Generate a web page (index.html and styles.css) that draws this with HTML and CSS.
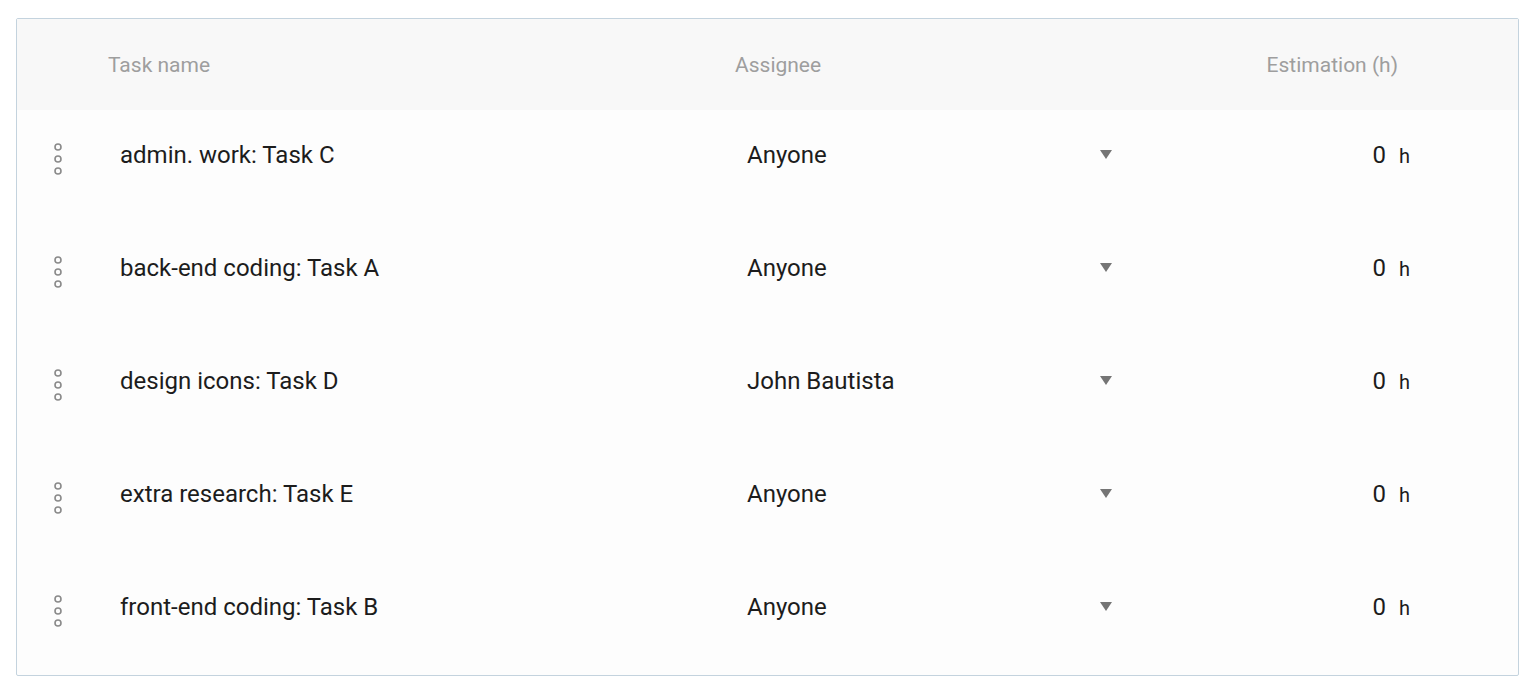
FILE: index.html
```html
<!DOCTYPE html>
<html>
<head>
<meta charset="utf-8">
<link rel="stylesheet" href="styles.css">
</head>
<body>
<div class="table">
  <div class="row head">
    <div class="c-handle"></div>
    <div class="c-name"><span class="h-txt">Task name</span></div>
    <div class="c-assignee"><span class="h-txt">Assignee</span></div>
    <div class="c-est"><span class="h-txt">Estimation (h)</span></div>
  </div>
  <div class="row item">
    <div class="c-handle"><svg class="dots" width="12" height="32" viewBox="0 0 12 32"><circle cx="6" cy="4" r="3"/><circle cx="6" cy="16" r="3"/><circle cx="6" cy="28" r="3"/></svg></div>
    <div class="c-name"><span class="val">admin. work: Task C</span></div>
    <div class="c-assignee"><span class="val">Anyone</span><span class="arrow"></span></div>
    <div class="c-est"><span class="num">0</span><span class="unit">h</span></div>
  </div>
  <div class="row item">
    <div class="c-handle"><svg class="dots" width="12" height="32" viewBox="0 0 12 32"><circle cx="6" cy="4" r="3"/><circle cx="6" cy="16" r="3"/><circle cx="6" cy="28" r="3"/></svg></div>
    <div class="c-name"><span class="val">back-end coding: Task A</span></div>
    <div class="c-assignee"><span class="val">Anyone</span><span class="arrow"></span></div>
    <div class="c-est"><span class="num">0</span><span class="unit">h</span></div>
  </div>
  <div class="row item">
    <div class="c-handle"><svg class="dots" width="12" height="32" viewBox="0 0 12 32"><circle cx="6" cy="4" r="3"/><circle cx="6" cy="16" r="3"/><circle cx="6" cy="28" r="3"/></svg></div>
    <div class="c-name"><span class="val">design icons: Task D</span></div>
    <div class="c-assignee"><span class="val">John Bautista</span><span class="arrow"></span></div>
    <div class="c-est"><span class="num">0</span><span class="unit">h</span></div>
  </div>
  <div class="row item">
    <div class="c-handle"><svg class="dots" width="12" height="32" viewBox="0 0 12 32"><circle cx="6" cy="4" r="3"/><circle cx="6" cy="16" r="3"/><circle cx="6" cy="28" r="3"/></svg></div>
    <div class="c-name"><span class="val">extra research: Task E</span></div>
    <div class="c-assignee"><span class="val">Anyone</span><span class="arrow"></span></div>
    <div class="c-est"><span class="num">0</span><span class="unit">h</span></div>
  </div>
  <div class="row item">
    <div class="c-handle"><svg class="dots" width="12" height="32" viewBox="0 0 12 32"><circle cx="6" cy="4" r="3"/><circle cx="6" cy="16" r="3"/><circle cx="6" cy="28" r="3"/></svg></div>
    <div class="c-name"><span class="val">front-end coding: Task B</span></div>
    <div class="c-assignee"><span class="val">Anyone</span><span class="arrow"></span></div>
    <div class="c-est"><span class="num">0</span><span class="unit">h</span></div>
  </div>
</div>
</body>
</html>
```
FILE: styles.css
```css
html, body {
  margin: 0;
  padding: 0;
  background: #ffffff;
}
body {
  padding: 18px 13px 0 16px;
  font-family: Roboto, "Liberation Sans", Arial, sans-serif;
}
.table {
  border: 1px solid #c4d3de;
  border-radius: 2px;
  height: 656px;
  box-sizing: content-box;
  background: #fdfdfd;
}
.row {
  display: grid;
  grid-template-columns: 79px 627px 407px 1fr;
}
.head {
  background: #f8f8f8;
  height: 91px;
  align-items: center;
}
.h-txt {
  font-size: 21px;
  color: #9e9e9e;
  padding-left: 12px;
}
.head .c-est {
  text-align: right;
  padding-right: 120px;
}
.item {
  height: 113px;
  box-sizing: border-box;
  align-items: start;
  padding-top: 30px;
}
.item > div {
  height: 30px;
  display: flex;
  align-items: center;
}
.dots {
  margin-left: 35px;
  margin-top: 7px;
  fill: none;
  stroke: #8a8a8a;
  stroke-width: 1.6;
}
.val {
  font-size: 24px;
  color: #1c1c1c;
  padding-left: 24px;
}
.item .c-assignee {
  justify-content: space-between;
}
.arrow {
  width: 0;
  height: 0;
  border-left: 6px solid transparent;
  border-right: 6px solid transparent;
  border-top: 9px solid #757575;
  margin-right: 18px;
  margin-top: -2px;
}
.item .c-est {
  justify-content: flex-end;
  padding-right: 108px;
}
.num {
  font-size: 24px;
  color: #1c1c1c;
}
.unit {
  font-size: 20px;
  color: #1c1c1c;
  margin-left: 13px;
  margin-top: 1px;
}
```
